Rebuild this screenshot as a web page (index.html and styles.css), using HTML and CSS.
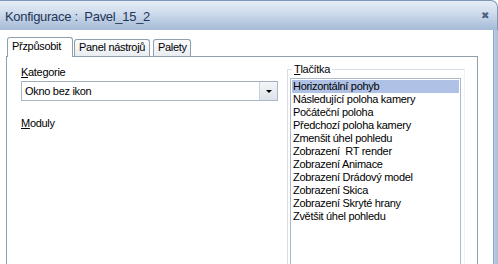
FILE: index.html
```html
<!DOCTYPE html>
<html lang="cs">
<head>
  <meta charset="UTF-8">
  <title>Konfigurace</title>
  <link rel="stylesheet" href="styles.css">
</head>
<body>

  <div class="window">
    <div class="titlebar">
      <span class="title">Konfigurace :&nbsp; Pavel_15_2</span>
      <span class="close">&#x2716;</span>
    </div>

    <div class="client">
      <div class="content">
        <div class="tabs">
          <div class="tab active">Přzpůsobit</div>
          <div class="tab tab-panel">Panel nástrojů</div>
          <div class="tab tab-palety">Palety</div>
        </div>

        <div class="panel">
          <div class="left">
            <div class="label"><u>K</u>ategorie</div>
            <div class="combo">
              <span class="combo-text">Okno bez ikon</span>
              <span class="combo-btn"><span class="arrow"></span></span>
            </div>
            <div class="label moduly"><u>M</u>oduly</div>
          </div>

          <fieldset class="group">
            <legend><u>T</u>lačítka</legend>
            <ul class="listbox">
              <li class="selected">Horizontální pohyb</li>
              <li>Následující poloha kamery</li>
              <li>Počáteční poloha</li>
              <li>Předchozí poloha kamery</li>
              <li>Zmenšit úhel pohledu</li>
              <li>Zobrazení&nbsp; RT render</li>
              <li>Zobrazení Animace</li>
              <li>Zobrazení Drádový model</li>
              <li>Zobrazení Skica</li>
              <li>Zobrazení Skryté hrany</li>
              <li>Zvětšit úhel pohledu</li>
            </ul>
          </fieldset>
        </div>
      </div>
      <div class="edge"></div>
    </div>
  </div>

</body>
</html>
```

FILE: styles.css
```css
* {
  box-sizing: border-box;
  margin: 0;
  padding: 0;
}

body {
  background-color: #fff;
  font-family: 'Liberation Sans', Arial, sans-serif;
  font-size: 11px;
  letter-spacing: -0.3px;
  color: #000;
}

.window {
  width: 498px;
  height: 264px;
  overflow: hidden;
}

/* Title bar */
.titlebar {
  height: 30px;
  display: flex;
  align-items: center;
  justify-content: space-between;
  padding: 0 8px 0 5px;
  background: linear-gradient(to bottom, #e6edf6 0%, #d3dfee 35%, #b9cbe2 70%, #a6bbd7 100%);
  border-top: 1px solid #7f97b8;
  border-right: 1px solid #7f97b8;
  border-top-right-radius: 7px;
}

.title {
  font-size: 13px;
  letter-spacing: -0.3px;
  color: #1e3557;
  padding-top: 2px;
}

.close {
  font-size: 10px;
  color: #4a6285;
  text-shadow: 0 1px 0 #dde6f1;
}

/* Client area */
.client {
  display: flex;
  height: 234px;
}

.content {
  width: 493px;
  background-color: #fff;
}

.edge {
  flex: 1;
  background: linear-gradient(to right, #8fa5c2 0, #8fa5c2 1px, #bccde2 1px, #a9bdd8 100%);
}

/* Tabs */
.tabs {
  display: flex;
  align-items: flex-end;
  height: 26px;
  padding-left: 7px;
}

.tab {
  height: 17px;
  padding: 1px 4px 0;
  border: 1px solid #8e9fae;
  border-bottom: none;
  border-radius: 3px 3px 0 0;
  background: linear-gradient(to bottom, #fbfcfd, #e9edf2);
  white-space: nowrap;
}

.tab.active {
  height: 20px;
  width: 66px;
  padding: 2px 4px 0;
  background: #fff;
  position: relative;
  margin-bottom: -1px;
}

.tab-panel {
  width: 76px;
  margin-left: 1px;
}

.tab-palety {
  width: 38px;
  margin-left: 3px;
}

/* Tab panel */
.panel {
  display: flex;
  margin-left: 6px;
  width: 472px;
  height: 300px;
  border: 1px solid #8e9fae;
  padding: 8px 0 0 14px;
}

.left {
  width: 257px;
}

.label {
  height: 16px;
  padding-top: 1px;
}

.combo {
  display: flex;
  height: 20px;
  border: 1px solid #abb7c6;
  border-top-color: #a2aebd;
}

.combo-text {
  flex: 1;
  padding: 3px 0 0 3px;
}

.combo-btn {
  width: 18px;
  display: flex;
  align-items: center;
  justify-content: center;
  border-left: 1px solid #c9d2dd;
  background: linear-gradient(to bottom, #f4f6f8, #dde3ea);
}

.arrow {
  width: 0;
  height: 0;
  border-left: 3px solid transparent;
  border-right: 3px solid transparent;
  border-top: 3px solid #000;
}

.moduly {
  margin-top: 15px;
}

/* Group box */
.group {
  margin-left: 9px;
  margin-top: -2px;
  width: 178px;
  border: 1px solid #d5dde6;
  border-right-color: #f0f3f6;
  padding: 3px 0 0 2px;
}

.group legend {
  margin-left: 2px;
  padding: 0 2px;
}

.listbox {
  list-style: none;
  width: 171px;
  height: 200px;
  border: 1px solid #aabbd0;
  padding: 1px 1px 0 1px;
}

.listbox li {
  height: 13px;
  line-height: 12px;
  padding-left: 1px;
  white-space: nowrap;
}

.listbox li.selected {
  background-color: #afc2e6;
}
```
